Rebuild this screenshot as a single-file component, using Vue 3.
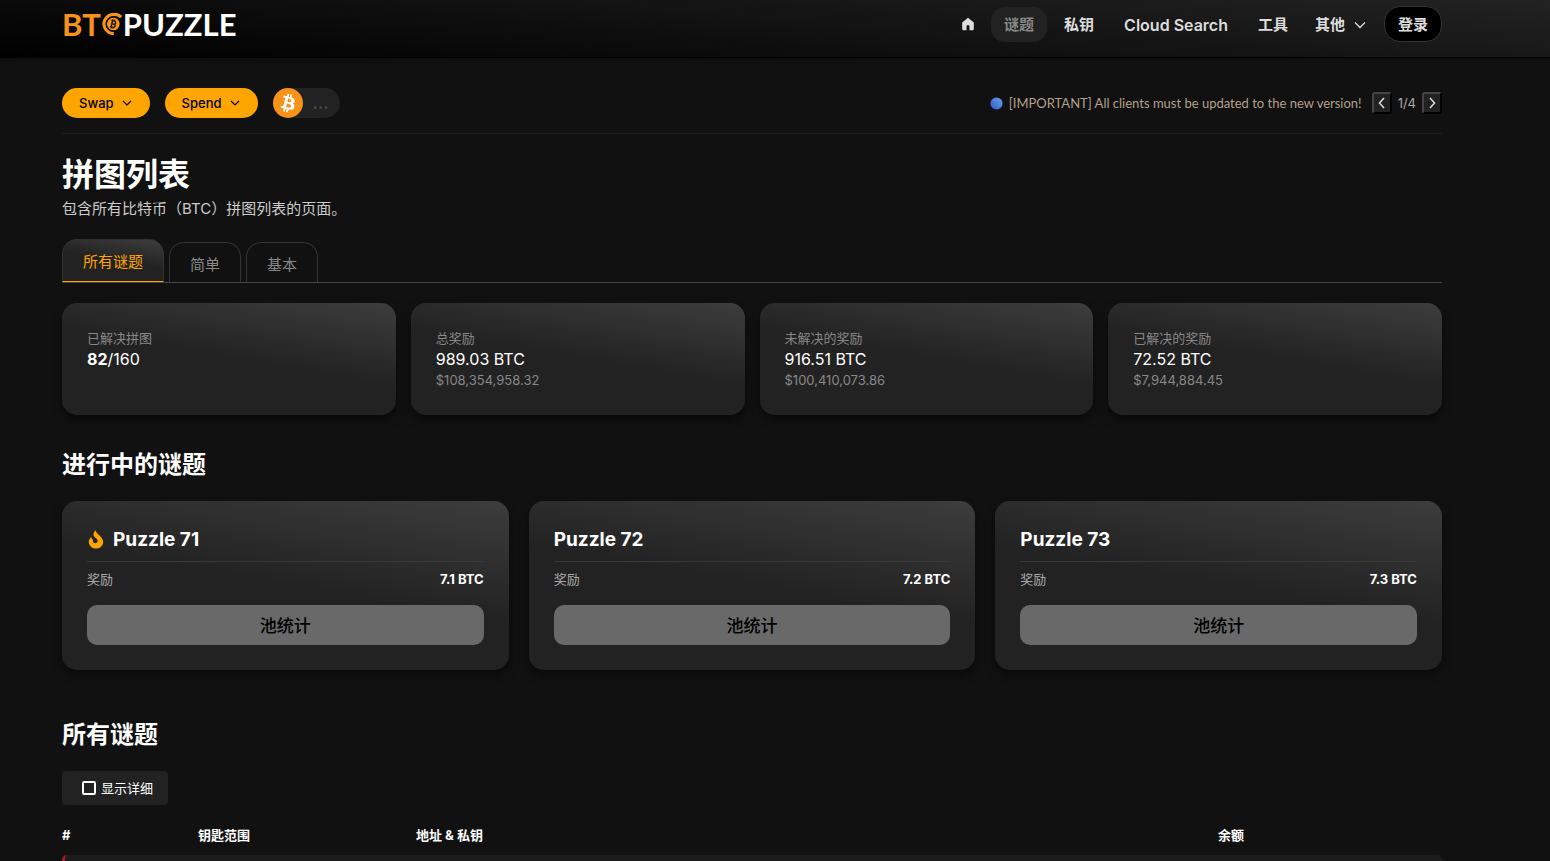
<script setup>
import { ref } from 'vue'

const tabs = ['所有谜题', '简单', '基本']
const activeTab = ref(0)
const detailed = ref(false)

const stats = [
  { label: '已解决拼图', strong: '82', value: '/160', usd: '' },
  { label: '总奖励', strong: '', value: '989.03 BTC', usd: '$108,354,958.32' },
  { label: '未解决的奖励', strong: '', value: '916.51 BTC', usd: '$100,410,073.86' },
  { label: '已解决的奖励', strong: '', value: '72.52 BTC', usd: '$7,944,884.45' }
]

const puzzles = [
  { name: 'Puzzle 71', reward: '7.1 BTC', hot: true },
  { name: 'Puzzle 72', reward: '7.2 BTC', hot: false },
  { name: 'Puzzle 73', reward: '7.3 BTC', hot: false }
]
</script>

<template>
  <div class="page">
    <header class="topbar">
      <a class="logo" href="#" aria-label="BTC Puzzle">
        <span class="logo-btc">BT</span>
        <svg class="logo-coin" viewBox="0 0 24 24" aria-hidden="true">
          <path d="M22 4.500A11 10.500 0 1 0 14 22.500" fill="none" stroke="#f7931a" stroke-width="3.500" />
          <circle cx="13.500" cy="12" r="7" fill="#f7931a" />
          <circle cx="13.500" cy="12" r="7.800" fill="none" stroke="#0b0b0b" stroke-width="1.300" />
          <g transform="rotate(12 13 12)" fill="none" stroke="#111" stroke-width="1.400">
            <path d="M10.500 8.500h3.500a1.700 1.700 0 0 1 0 3.500h-2.500M11.500 12h3a1.800 1.800 0 0 1 0 3.500h-4M11.800 8.500v7M12 7v1.500M14 7v1.500M12 15.500V17M14 15.500V17" />
          </g>
        </svg>
        <span class="logo-puzzle">PUZZLE</span>
      </a>
      <nav class="nav">
        <a class="nav-item nav-home" href="#" aria-label="Home">
          <svg width="14" height="14" viewBox="0 0 14 14"><path d="M7 1 1.500 5.600V12a1 1 0 0 0 1 1h2.700V9.500a1.800 1.800 0 0 1 3.600 0V13h2.700a1 1 0 0 0 1-1V5.600z" fill="#ddd" stroke="#ddd" stroke-width="0.600" stroke-linejoin="round" /></svg>
        </a>
        <a class="nav-item current" href="#">谜题</a>
        <a class="nav-item" href="#">私钥</a>
        <a class="nav-item nav-latin" href="#">Cloud Search</a>
        <a class="nav-item" href="#">工具</a>
        <button class="nav-item nav-more" type="button">其他
          <svg width="12" height="12" viewBox="0 0 12 12"><path d="m1 3.500 5 5 5-5" fill="none" stroke="currentColor" stroke-width="1.300" /></svg>
        </button>
        <button class="login" type="button">登录</button>
      </nav>
    </header>

    <main class="content">
      <div class="toolbar">
        <button class="pill" type="button">Swap
          <svg width="10" height="10" viewBox="0 0 10 10"><path d="m1 3 4 4 4-4" fill="none" stroke="currentColor" stroke-width="1.200" /></svg>
        </button>
        <button class="pill" type="button">Spend
          <svg width="10" height="10" viewBox="0 0 10 10"><path d="m1 3 4 4 4-4" fill="none" stroke="currentColor" stroke-width="1.200" /></svg>
        </button>
        <div class="price">
          <svg width="30" height="30" viewBox="0 0 32 32" aria-hidden="true">
            <circle cx="16" cy="16" r="16" fill="#f7931a" />
            <path fill="#fff" d="M23.189 14.020c.314-2.096-1.283-3.223-3.465-3.975l.708-2.840-1.728-.43-.69 2.765c-.454-.114-.92-.22-1.385-.326l.695-2.783L15.596 6l-.708 2.839c-.376-.086-.746-.17-1.104-.26l.002-.009-2.384-.595-.46 1.846s1.283.294 1.256.312c.7.175.826.638.805 1.006l-.806 3.235c.048.012.11.030.18.057l-.183-.045-1.130 4.532c-.086.212-.303.531-.793.410.018.025-1.256-.313-1.256-.313l-.858 1.978 2.250.561c.418.105.828.215 1.231.318l-.715 2.872 1.727.43.708-2.840c.472.127.930.245 1.378.357l-.706 2.828 1.728.430.715-2.866c2.948.558 5.164.333 6.097-2.333.752-2.146-.037-3.385-1.588-4.192 1.130-.260 1.980-1.003 2.207-2.538zm-3.950 5.538c-.533 2.147-4.148.986-5.320.695l.950-3.805c1.172.293 4.929.872 4.370 3.110zm.535-5.569c-.487 1.953-3.495.960-4.470.717l.860-3.450c.975.243 4.118.696 3.610 2.733z" />
          </svg>
          <span class="price-text">...</span>
        </div>
        <div class="notice">
          <svg width="13" height="13" viewBox="0 0 14 14" aria-hidden="true">
            <defs><linearGradient id="dot" x1="0" y1="1" x2="1" y2="0"><stop offset="0" stop-color="#3a55c8" /><stop offset="1" stop-color="#5fa8ec" /></linearGradient></defs>
            <circle cx="7" cy="7" r="6.500" fill="url(#dot)" />
          </svg>
          <span class="notice-text">[IMPORTANT] All clients must be updated to the new version!</span>
          <button class="step" type="button" aria-label="Previous">
            <svg width="12" height="12" viewBox="0 0 12 12"><path d="M8 1 3.500 6 8 11" fill="none" stroke="currentColor" stroke-width="1.500" /></svg>
          </button>
          <span class="notice-count">1/4</span>
          <button class="step" type="button" aria-label="Next">
            <svg width="12" height="12" viewBox="0 0 12 12"><path d="M4 1 8.500 6 4 11" fill="none" stroke="currentColor" stroke-width="1.500" /></svg>
          </button>
        </div>
      </div>

      <h1>拼图列表</h1>
      <p class="lead">包含所有比特币（BTC）拼图列表的页面。</p>

      <div class="tabs" role="tablist">
        <button
          v-for="(tab, i) in tabs"
          :key="tab"
          type="button"
          role="tab"
          :aria-selected="i === activeTab"
          :class="['tab', { active: i === activeTab }]"
          @click="activeTab = i"
        >{{ tab }}</button>
      </div>

      <section class="stats">
        <article v-for="s in stats" :key="s.label" class="card">
          <div class="muted">{{ s.label }}</div>
          <div class="amount"><b v-if="s.strong">{{ s.strong }}</b>{{ s.value }}</div>
          <div v-if="s.usd" class="usd">{{ s.usd }}</div>
        </article>
      </section>

      <h2>进行中的谜题</h2>
      <section class="puzzles">
        <article v-for="p in puzzles" :key="p.name" class="card">
          <h3>
            <svg v-if="p.hot" width="16" height="20" viewBox="0 0 16 20" aria-hidden="true"><path d="M7.500.200C8 4 15.300 6.300 15.300 12.600A7.400 7.200 0 0 1 .700 12.600C.700 10.200 1.800 8.200 3.400 6.800 3.300 8.400 3.700 9.300 5 9.800 4.600 11.800 5.600 13.300 7.200 13.300 9.400 13.300 10.200 11.200 9.200 9.400 8.400 8 6.200 7.400 5.600 5.400 5.200 3.600 6 1.800 7.500.200z" fill="#ffa500" /></svg>
            {{ p.name }}
          </h3>
          <div class="reward"><span>奖励</span><b>{{ p.reward }}</b></div>
          <button class="pool" type="button">池统计</button>
        </article>
      </section>

      <h2 class="all-title">所有谜题</h2>
      <label class="detail">
        <input v-model="detailed" type="checkbox">
        <span>显示详细</span>
      </label>

      <table>
        <thead>
          <tr>
            <th class="col-id">#</th>
            <th class="col-range">钥匙范围</th>
            <th>地址 &amp; 私钥</th>
            <th class="col-balance">余额</th>
          </tr>
        </thead>
        <tbody>
          <tr><td></td><td></td><td></td><td></td></tr>
        </tbody>
      </table>
    </main>
  </div>
</template>

<style>
body {
  margin: 0;
  background: #111;
}
</style>

<style scoped>
.page {
  height: 100vh;
  overflow: hidden;
  background: #111;
  color: #fff;
  font: 15px/22px Inter, "Noto Sans CJK SC", sans-serif;
}
*,
*::before {
  box-sizing: border-box;
}
button {
  font: inherit;
  color: inherit;
  margin: 0;
  padding: 0;
  border: 0;
  background: none;
}
a {
  color: inherit;
  text-decoration: none;
}
svg {
  flex: none;
  display: block;
}
.topbar {
  display: flex;
  justify-content: space-between;
  align-items: center;
  height: 58px;
  padding: 0 108px 9px 62px;
  border-bottom: 1px solid #000;
  background: linear-gradient(5deg, #000, #222);
  box-shadow: 0 1px 4px rgba(0, 0, 0, 0.4);
}
.logo {
  display: flex;
  align-items: center;
  font: 31px/40px Lato, sans-serif;
}
.logo-btc {
  color: #f7931a;
  font-weight: 700;
}
.logo-coin {
  width: 22px;
  height: 22px;
}
.logo-puzzle {
  font-weight: 700;
}
.nav {
  display: flex;
  align-items: center;
  gap: 4px;
  font-weight: 700;
  color: #ddd;
}
.nav-item {
  display: flex;
  align-items: center;
  height: 35px;
  padding: 2px 13px 0;
  border-radius: 14px;
}
.nav-home {
  padding: 0 12px;
}
.nav-latin {
  font-size: 16px;
  font-weight: 600;
}
.nav-item.current {
  background: #222;
  color: #888;
}
.nav-more {
  gap: 9px;
  padding: 2px 14px 0 10px;
}
.login {
  width: 58px;
  height: 36px;
  padding-top: 2px;
  border: 1px solid #333;
  border-radius: 16px;
  background: #000;
}
.content {
  padding: 30px 108px 0 62px;
}
.toolbar {
  display: flex;
  align-items: center;
  gap: 15px;
  padding-bottom: 15px;
  border-bottom: 1px solid #1d1d1d;
  font-size: 13px;
}
.pill {
  display: flex;
  align-items: center;
  gap: 8px;
  height: 30px;
  padding: 0 18px 0 17px;
  border-radius: 15px;
  background: #ffa500;
  color: #000;
  font-weight: 500;
}
.price {
  display: flex;
  width: 67px;
  height: 30px;
  border-radius: 15px;
  background: #222;
}
.price-text {
  margin-left: 10px;
  font-size: 16px;
  font-weight: 700;
  line-height: 30px;
  color: #444;
}
.notice {
  display: flex;
  align-items: center;
  gap: 6px;
  margin-left: auto;
  color: #aaa;
}
.notice-text {
  margin-right: 4px;
  font-family: Lato, sans-serif;
  color: #b3a08c;
}
.notice-count {
  color: #aaa;
}
.step {
  display: flex;
  align-items: center;
  justify-content: center;
  width: 20px;
  height: 22px;
  border: 2px solid;
  border-color: #444 #000 #000 #444;
  border-radius: 3px;
  background: #222;
  color: #ddd;
}
h1 {
  margin: 21px 0 0;
  font-size: 32px;
  line-height: 40px;
}
.lead {
  margin: 3px 0 0;
  color: #ccc;
}
.tabs {
  display: flex;
  align-items: flex-end;
  gap: 5px;
  margin-top: 19px;
  border-bottom: 1px solid #444;
}
.tab {
  height: 40px;
  padding: 4px 20px 0;
  border: 1px solid #333;
  border-bottom: 0;
  border-radius: 15px 15px 0 0;
  color: #888;
}
.tab.active {
  height: 43px;
  padding-top: 2px;
  border-bottom: 1px solid #ffa500;
  background: linear-gradient(10deg, #222 50%, #3d3d3d);
  color: #ffa500;
}
.stats {
  display: grid;
  grid-template-columns: repeat(4, 1fr);
  gap: 15px;
  margin-top: 20px;
}
.card {
  padding: 25px;
  border-radius: 15px;
  background: linear-gradient(10deg, #222 50%, #3d3d3d);
  box-shadow: 0 5px 10px rgba(0, 0, 0, 0.5);
}
.stats .card {
  height: 112px;
  line-height: 21px;
}
.muted,
.usd {
  font-size: 13px;
  color: #888;
}
.amount {
  font-size: 16px;
}
h2 {
  margin: 33px 0 0;
  font-size: 24px;
  line-height: 34px;
}
.puzzles {
  display: grid;
  grid-template-columns: repeat(3, 1fr);
  gap: 20px;
  margin-top: 19px;
}
h3 {
  display: flex;
  align-items: center;
  gap: 9px;
  margin: 0;
  padding-bottom: 8px;
  border-bottom: 1px solid #383838;
  font-size: 19px;
  line-height: 27px;
}
h3 svg {
  margin-left: 1px;
}
.reward {
  display: flex;
  justify-content: space-between;
  margin-top: 6px;
  font-size: 13px;
}
.reward span {
  color: #aaa;
}
.pool {
  display: block;
  width: 100%;
  height: 40px;
  margin-top: 15px;
  padding-top: 2px;
  border-radius: 10px;
  background: #696969;
  color: #000;
  font-size: 17px;
  font-weight: 500;
}
.all-title {
  margin-top: 48px;
}
.detail {
  display: inline-flex;
  align-items: center;
  gap: 5px;
  height: 34px;
  margin-top: 19px;
  padding: 0 15px 0 20px;
  border-radius: 4px;
  background: #222;
  font-size: 13px;
}
.detail input {
  appearance: none;
  width: 14px;
  height: 14px;
  margin: 0;
  border: 2px solid #fff;
  border-radius: 2px;
}
.detail input:checked {
  background: #ffa500;
}
table {
  width: 100%;
  margin-top: 10px;
  border-collapse: separate;
  border-spacing: 0;
  table-layout: fixed;
  font-size: 13px;
}
th {
  height: 40px;
  padding: 0;
  text-align: left;
}
.col-id {
  width: 136px;
}
.col-range {
  width: 218px;
}
.col-balance {
  width: 224px;
}
td {
  height: 50px;
  background: #1c1c1c;
}
td:first-child {
  border-left: 3px solid #b5122f;
  border-radius: 5px 0 0 5px;
}
td:last-child {
  border-radius: 0 5px 5px 0;
}
</style>
